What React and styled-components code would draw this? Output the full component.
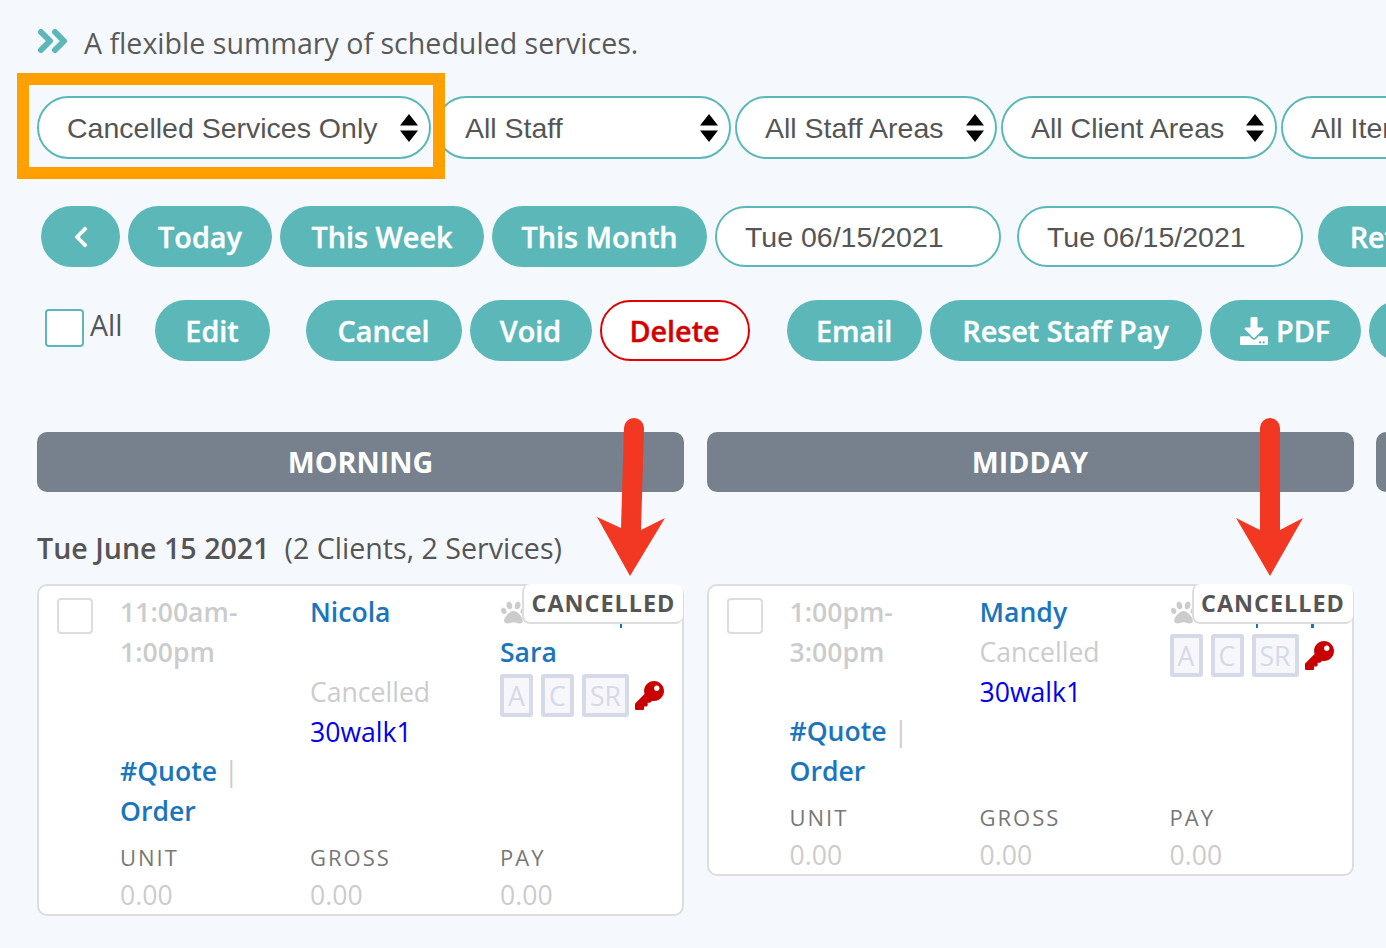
import styled, { createGlobalStyle } from "styled-components";
import { FaChevronLeft, FaDownload, FaKey, FaPaw } from "react-icons/fa";

const TEAL = "#5cb8b8";

function App() {
  return (
    <>
      <GlobalStyles />
      <Page>
        <Title>
          <svg viewBox="0 0 30 24">
            <path d="M3 3 L12 12 L3 21 M17 3 L26 12 L17 21" />
          </svg>
          <span>A flexible summary of scheduled services.</span>
        </Title>

        <Filters>
          <Highlighted>
            <Select $w={394} label="Cancelled Services Only" />
            <OrangeBox />
          </Highlighted>
          <Select $w={296} label="All Staff" />
          <Select $w={262} label="All Staff Areas" />
          <Select $w={276} label="All Client Areas" />
          <Select $w={260} label="All Items" />
        </Filters>

        <DateRow>
          <BackButton $w={79}>
            <FaChevronLeft />
          </BackButton>
          <Button $w={144}>Today</Button>
          <Button $w={204}>This Week</Button>
          <Button $w={215}>This Month</Button>
          <DateInput>Tue 06/15/2021</DateInput>
          <DateInput $ml={8}>Tue 06/15/2021</DateInput>
          <Button $w={170} $ml={7}>
            Refresh
          </Button>
        </DateRow>

        <ActionRow>
          <CheckAll />
          <AllLabel>All</AllLabel>
          <Button $w={115} $ml={24}>
            Edit
          </Button>
          <Button $w={156} $ml={28}>
            Cancel
          </Button>
          <Button $w={122}>Void</Button>
          <DeleteButton $w={150}>Delete</DeleteButton>
          <Button $w={135} $ml={29}>
            Email
          </Button>
          <Button $w={272}>Reset Staff Pay</Button>
          <Button $w={151}>
            <FaDownload />
            PDF
          </Button>
          <Button $w={140}>More</Button>
        </ActionRow>

        <Columns>
          <Column>
            <ColumnHead>MORNING</ColumnHead>
            <DayHeading>
              <b>Tue June 15 2021</b>(2 Clients, 2 Services)
            </DayHeading>
            <Card>
              <Cancelled>CANCELLED</Cancelled>
              <Tick $left={581} $w={2} />
              <RowCheck />
              <Main>
                <Time>
                  11:00am-
                  <br />
                  1:00pm
                </Time>
                <div>
                  <ClientLink>Nicola</ClientLink>
                  <Blank />
                  <Muted>Cancelled</Muted>
                  <ServiceLink>30walk1</ServiceLink>
                </div>
                <div>
                  <PawLine>
                    <FaPaw />
                  </PawLine>
                  <ClientLink>Sara</ClientLink>
                  <Badges />
                </div>
              </Main>
              <Quote>
                <a>#Quote</a> <i>|</i> <a>Order</a>
              </Quote>
              <Totals />
            </Card>
            <Arrow
              $left={560}
              d="M27 10 A10 10 0 0 1 47 10 L44 112 L68 100 L33 158 L0 99 L24 110 Z"
            />
          </Column>

          <Column>
            <ColumnHead>MIDDAY</ColumnHead>
            <DayHeading />
            <Card>
              <Cancelled>CANCELLED</Cancelled>
              <Tick $left={547} $w={2} />
              <Tick $left={602} $w={3} />
              <RowCheck />
              <Main>
                <Time>
                  1:00pm-
                  <br />
                  3:00pm
                </Time>
                <div>
                  <ClientLink>Mandy</ClientLink>
                  <Muted>Cancelled</Muted>
                  <ServiceLink>30walk1</ServiceLink>
                </div>
                <div>
                  <PawLine>
                    <FaPaw />
                  </PawLine>
                  <Badges />
                </div>
              </Main>
              <Quote>
                <a>#Quote</a> <i>|</i> <a>Order</a>
              </Quote>
              <Totals />
            </Card>
            <Arrow
              $left={529}
              d="M24 10 A10 10 0 0 1 44 10 L44 112 L67 100 L34 158 L0 100 L24 112 Z"
            />
          </Column>

          <Column>
            <ColumnHead />
          </Column>
        </Columns>
      </Page>
    </>
  );
}

function Select({ label, $w }) {
  return (
    <SelectBox $w={$w}>
      {label}
      <svg viewBox="0 0 20 30" width="20" height="30">
        <path d="M10 1 L19 12.5 H1 Z M10 29 L1 17.5 H19 Z" fill="#000" />
      </svg>
    </SelectBox>
  );
}

function Badges() {
  return (
    <BadgeRow>
      <Badge>A</Badge>
      <Badge>C</Badge>
      <Badge>SR</Badge>
      <FaKey />
    </BadgeRow>
  );
}

function Totals() {
  return (
    <TotalsRow>
      <div>
        <TotalLabel>UNIT</TotalLabel>
        <TotalValue>0.00</TotalValue>
      </div>
      <div>
        <TotalLabel>GROSS</TotalLabel>
        <TotalValue>0.00</TotalValue>
      </div>
      <div>
        <TotalLabel>PAY</TotalLabel>
        <TotalValue>0.00</TotalValue>
      </div>
    </TotalsRow>
  );
}

function Arrow({ $left, d }) {
  return (
    <ArrowSvg $left={$left} viewBox="0 0 70 160" width="70" height="160">
      <path d={d} fill="#f23722" />
    </ArrowSvg>
  );
}

export default App;

const GlobalStyles = createGlobalStyle`
  html, body {
    margin: 0;
    height: 100%;
    overflow: hidden;
    background: #f5f9fd;
  }
  body {
    font-family: "Open Sans", sans-serif;
    font-size: 26.6px;
    color: #555;
  }
`;

const Page = styled.div`
  width: 1386px;
  height: 948px;
  overflow: hidden;
  padding: 22px 0 0 37px;
  box-sizing: border-box;
`;

const Title = styled.div`
  display: flex;
  align-items: center;
  height: 40px;
  font-size: 28.6px;
  color: #5a5a5a;

  svg {
    width: 30px;
    height: 24px;
    margin: -3px 17px 0 0;
    transform: translateX(1px);
    flex-shrink: 0;
    fill: none;
    stroke: ${TEAL};
    stroke-width: 6;
    stroke-linecap: round;
    stroke-linejoin: round;
  }
`;

const Filters = styled.div`
  display: flex;
  gap: 4px;
  margin-top: 34px;
`;

const Highlighted = styled.div`
  position: relative;
  flex-shrink: 0;
`;

const OrangeBox = styled.div`
  position: absolute;
  top: -23px;
  left: -20px;
  right: -14px;
  bottom: -20px;
  border: 12px solid #ffa000;
`;

const SelectBox = styled.div`
  display: flex;
  align-items: center;
  justify-content: space-between;
  flex-shrink: 0;
  box-sizing: border-box;
  width: ${({ $w }) => $w}px;
  height: 63px;
  padding: 2px 10px 0 28px;
  background: #fff;
  border: 2px solid ${TEAL};
  border-radius: 32px;
  font-family: "Liberation Sans", Arial, sans-serif;
  font-size: 28.5px;
  color: #555;
  white-space: nowrap;

  svg {
    margin-top: -2px;
  }
`;

const DateRow = styled.div`
  display: flex;
  gap: 8px;
  margin: 47px 0 0 4px;
`;

const ActionRow = styled.div`
  display: flex;
  gap: 8px;
  margin: 33px 0 0 8px;
`;

const Button = styled.div`
  display: flex;
  align-items: center;
  justify-content: center;
  gap: 8px;
  flex-shrink: 0;
  width: ${({ $w }) => $w}px;
  height: 61px;
  margin-left: ${({ $ml }) => $ml || 0}px;
  box-sizing: border-box;
  border-radius: 31px;
  background: ${TEAL};
  color: #fff;
  font-size: 28.8px;
  font-weight: 600;
  -webkit-text-stroke: 0.4px currentColor;
  white-space: nowrap;

  svg {
    width: 28px;
    height: 28px;
  }
`;

const BackButton = styled(Button)`
  svg {
    width: 18px;
    height: 24px;
  }
`;

const DeleteButton = styled(Button)`
  background: #fff;
  border: 2px solid #e00000;
  color: #d40000;
`;

const DateInput = styled.div`
  display: flex;
  align-items: center;
  flex-shrink: 0;
  box-sizing: border-box;
  width: 286px;
  height: 61px;
  padding: 1px 0 0 28px;
  margin-left: ${({ $ml }) => $ml || 0}px;
  background: #fff;
  border: 2px solid ${TEAL};
  border-radius: 31px;
  font-family: "Liberation Sans", Arial, sans-serif;
  font-size: 28.5px;
  color: #555;
`;

const CheckAll = styled.div`
  flex-shrink: 0;
  box-sizing: border-box;
  width: 39px;
  height: 38px;
  margin-top: 9px;
  background: #fff;
  border: 2px solid ${TEAL};
  border-radius: 4px;
`;

const AllLabel = styled.div`
  margin: 6px 0 0 -2px;
  line-height: 38px;
  font-size: 28.6px;
  color: #555;
`;

const Columns = styled.div`
  display: flex;
  align-items: flex-start;
  gap: 22.5px;
  margin-top: 71px;
`;

const Column = styled.div`
  position: relative;
  flex-shrink: 0;
  width: 647px;
`;

const ColumnHead = styled.div`
  height: 60px;
  line-height: 60px;
  border-radius: 10px;
  background: #76818d;
  color: #fff;
  font-size: 28.6px;
  font-weight: 700;
  text-align: center;
`;

const DayHeading = styled.div`
  height: 92px;
  padding-top: 36px;
  box-sizing: border-box;
  line-height: 40px;
  font-size: 28.6px;
  color: #555;
  white-space: nowrap;

  b {
    font-weight: 600;
    margin-right: 15px;
  }
`;

const Card = styled.div`
  position: relative;
  display: grid;
  grid-template-columns: 63px 1fr;
  box-sizing: border-box;
  padding: 6px 0 0 18px;
  background: #fff;
  border: 2px solid #ddd;
  border-radius: 10px;
  line-height: 40px;
`;

const Cancelled = styled.div`
  position: absolute;
  top: -2px;
  right: -1px;
  box-sizing: border-box;
  width: 161px;
  height: 40px;
  line-height: 38px;
  text-align: center;
  background: #fff;
  border: 2px solid #ddd;
  border-width: 0 0 2px 2px;
  border-radius: 8px;
  font-size: 23.4px;
  font-weight: 700;
  letter-spacing: 1px;
  color: #555;
  z-index: 1;
`;

const Tick = styled.span`
  position: absolute;
  top: 38px;
  left: ${({ $left }) => $left}px;
  width: ${({ $w }) => $w}px;
  height: 4px;
  background: #1a75bc;
`;

const RowCheck = styled.div`
  box-sizing: border-box;
  width: 36px;
  height: 36px;
  margin-top: 6px;
  background: #fff;
  border: 2px solid #ddd;
  border-radius: 4px;
`;

const Main = styled.div`
  display: grid;
  grid-template-columns: 190px 190px 1fr;
`;

const Time = styled.div`
  font-weight: 600;
  color: #ccc;
  white-space: nowrap;
`;

const ClientLink = styled.div`
  height: 40px;
  font-weight: 600;
  color: #1a75bc;
`;

const Blank = styled.div`
  height: 40px;
`;

const Muted = styled.div`
  height: 40px;
  color: #ccc;
`;

const ServiceLink = styled.div`
  height: 40px;
  color: #0000ee;
`;

const PawLine = styled.div`
  display: flex;
  align-items: center;
  height: 40px;

  svg {
    width: 27px;
    height: 25px;
    color: #ccc;
  }
`;

const BadgeRow = styled.div`
  display: flex;
  align-items: center;
  gap: 8px;
  margin-top: 2px;

  svg {
    width: 29px;
    height: 29px;
    margin-left: -2px;
    color: #c80000;
  }
`;

const Badge = styled.div`
  box-sizing: border-box;
  height: 43px;
  min-width: 33px;
  padding: 0 4px;
  line-height: 36px;
  text-align: center;
  border: 4px solid #d5d9e8;
  border-radius: 3px;
  background: #f7f7fb;
  color: #d5d9e8;
  font-size: 26.6px;
`;

const Quote = styled.div`
  grid-column: 2;
  width: 170px;
  line-height: 39.5px;
  font-weight: 600;
  color: #1a75bc;

  i {
    font-style: normal;
    font-weight: 400;
    color: #ccc;
  }
`;

const TotalsRow = styled.div`
  grid-column: 2;
  display: grid;
  grid-template-columns: 190px 190px 1fr;
  padding-top: 10px;
`;

const TotalLabel = styled.div`
  line-height: 32px;
  font-size: 22px;
  letter-spacing: 2px;
  color: #777;
`;

const TotalValue = styled.div`
  padding-top: 4px;
  line-height: 37px;
  font-size: 26.6px;
  color: #ccc;
`;

const ArrowSvg = styled.svg`
  position: absolute;
  top: -14px;
  left: ${({ $left }) => $left}px;
  z-index: 2;
`;
